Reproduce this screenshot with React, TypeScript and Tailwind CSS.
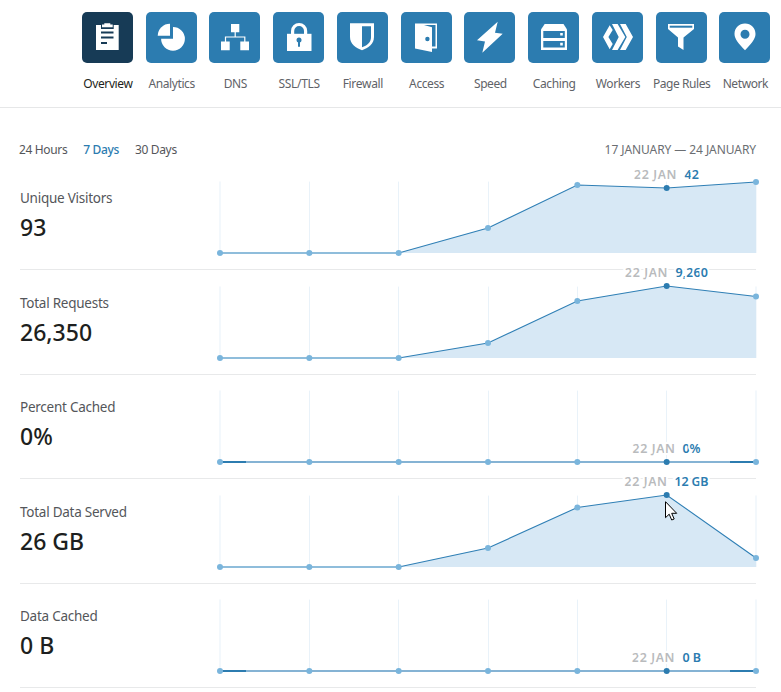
import React from "react";

type IconProps = { children: React.ReactNode };

function Glyph({ children }: IconProps) {
  return (
    <svg viewBox="0 0 51 51" className="size-full fill-white">
      {children}
    </svg>
  );
}

const BLUE = "#2c7cb0";
const NAVY = "#173b56";

const navItems = [
  {
    label: "Overview",
    tracking: "tracking-[-0.4px]",
    icon: (
      <Glyph>
        <path d="M14 13h5v4h12.7v-4h5v25H14z" />
        <path d="M20 12.6h2.3v-1.3h6v1.3h2.4v2.7H20z" />
        <path d="M19 20.5h12.5M19 25.5h12.5M19 31h6" stroke={NAVY} strokeWidth="1.9" />
      </Glyph>
    ),
  },
  {
    label: "Analytics",
    tracking: "tracking-[-0.4px]",
    icon: (
      <Glyph>
        <path d="M24 11.7v12H11.7A12.2 12.2 0 0 1 24 11.7z" />
        <path d="M27 14.9A11.9 11.9 0 1 1 15.1 26.8H27z" />
      </Glyph>
    ),
  },
  {
    label: "DNS",
    tracking: "tracking-[-0.4px]",
    icon: (
      <Glyph>
        <path d="M22 12h8.3v8.3H22zM12 29.5h8.7v8.7H12zM31.3 29.5H40v8.7h-8.7z" />
        <path d="M26.2 20v5M16.5 30v-5h19.3v5" fill="none" stroke="white" strokeWidth="1.2" />
      </Glyph>
    ),
  },
  {
    label: "SSL/TLS",
    tracking: "tracking-[-0.3px]",
    icon: (
      <Glyph>
        <path d="M14 21.8h24.5V39H14z" />
        <path d="M19.6 22.5V19a6.5 6.5 0 0 1 13 0v3.5" fill="none" stroke="white" strokeWidth="3.2" />
        <circle cx="26" cy="28" r="2.5" fill={BLUE} />
        <path d="M25 28h2v6.7h-2z" fill={BLUE} />
      </Glyph>
    ),
  },
  {
    label: "Firewall",
    tracking: "tracking-[-0.3px]",
    icon: (
      <Glyph>
        <path d="M13 11.2h24V25c0 7-6 11-12 13.3C19 36 13 32 13 25z" />
        <path d="M25 14.3h9V25c0 5.5-4 8.5-9 10.3z" fill={BLUE} />
      </Glyph>
    ),
  },
  {
    label: "Access",
    tracking: "tracking-[-0.4px]",
    icon: (
      <Glyph>
        <path d="M14 11.5h22v25h-5V40l-17-3.5z" />
        <path d="M23 13h11.5v21.5H31V15.2z" fill={BLUE} />
        <circle cx="26.4" cy="27" r="2.2" fill={BLUE} />
      </Glyph>
    ),
  },
  {
    label: "Speed",
    tracking: "tracking-[-0.4px]",
    icon: (
      <Glyph>
        <path d="M33.7 9.7 13 28.3l8 1.2-2.7 11.2 20.4-19-7.7-1z" />
      </Glyph>
    ),
  },
  {
    label: "Caching",
    tracking: "tracking-[-0.4px]",
    icon: (
      <Glyph>
        <path d="M16.7 12H35.5l3.5 5.5V38H13V17.5z" />
        <path d="M15.3 19h21.5v7H15.3zM15.3 29h21.5v6.5H15.3z" fill={BLUE} />
        <path d="M32.2 21h2.6v2.6h-2.6zM32.2 30.8h2.6v2.6h-2.6z" />
      </Glyph>
    ),
  },
  {
    label: "Workers",
    tracking: "tracking-[-0.4px]",
    icon: (
      <Glyph>
        <path d="M17.7 13.3l3 4.7-4.3 7 4.3 7-3 5.2L11 25z" />
        <path d="M20 12h5.6l7.7 13-7.7 13H20l6.7-13zM28 12h5.7L41 25l-7.3 13H28l6.8-13z" />
      </Glyph>
    ),
  },
  {
    label: "Page Rules",
    tracking: "tracking-[-0.45px]",
    icon: (
      <Glyph>
        <path d="M12 12h26v5l-10.500 8.500V38L22 34.500v-9L12 17z" />
        <path d="M13.700 13.700h22.600v2H13.700z" fill={BLUE} />
      </Glyph>
    ),
  },
  {
    label: "Network",
    tracking: "tracking-[-0.4px]",
    icon: (
      <Glyph>
        <path
          fillRule="evenodd"
          d="M26 11.5c6 0 10.5 4.6 10.5 10.5 0 5-4.5 10-10.5 16.3C20 32 15.5 27 15.5 22c0-5.9 4.500-10.500 10.500-10.500zm0 6.300a4.500 4.500 0 1 0 0 9 4.500 4.500 0 0 0 0-9z"
        />
      </Glyph>
    ),
  },
];

type Metric = {
  title: string;
  total: string;
  points: number[];
  value: string;
  dateX: number;
  valueX: number;
  valueWidth: number;
  height: string;
};

const metrics: Metric[] = [
  { title: "Unique Visitors", total: "93", points: [0, 0, 0, 25, 68, 65, 71], value: "42", dateX: 414, valueX: 464.5, valueWidth: 14.5, height: "h-[105px]" },
  { title: "Total Requests", total: "26,350", points: [0, 0, 0, 15, 57, 72, 61.5], value: "9,260", dateX: 405, valueX: 455.5, valueWidth: 32.5, height: "h-[105px]" },
  { title: "Percent Cached", total: "0%", points: [0, 0, 0, 0, 0, 0, 0], value: "0%", dateX: 412.5, valueX: 462.5, valueWidth: 18, height: "h-[104px]" },
  { title: "Total Data Served", total: "26 GB", points: [0, 0, 0, 19, 59.5, 72, 9], value: "12 GB", dateX: 404.5, valueX: 454.5, valueWidth: 34, height: "h-[105px]" },
  { title: "Data Cached", total: "0 B", points: [0, 0, 0, 0, 0, 0, 0], value: "0 B", dateX: 412, valueX: 462.5, valueWidth: 18.5, height: "h-[104px]" },
];

const STEP = 536 / 6;
const BASE = 72;

function Sparkline({ metric }: { metric: Metric }) {
  const pts = metric.points.map((v, i) => [i * STEP, BASE - v]);
  const flat = metric.points.every((v) => v === 0);
  const line = pts.map((p) => p.join(",")).join(" ");
  const hover = pts[5];
  return (
    <svg width="536" height="72" className="shrink-0 overflow-visible">
      {pts.map(([x], i) => (
        <line
          key={i}
          x1={i === 0 || i === 6 ? x : Math.floor(x) + 0.5}
          x2={i === 0 || i === 6 ? x : Math.floor(x) + 0.5}
          y1={0.6}
          y2={BASE}
          stroke={i === 0 || i === 6 ? "#f3f8fc" : "#e9f2f9"}
          strokeWidth={i === 0 || i === 6 ? 2 : 1}
        />
      ))}
      {!flat && (
        <>
          <polygon points={`${line} 536,${BASE}`} fill="#d7e8f5" />
          <polyline points={pts.slice(2).map((p) => p.join(",")).join(" ")} fill="none" stroke="#2f7fb5" strokeWidth="1.1" />
          <line x1="0" x2={2 * STEP} y1={BASE} y2={BASE} stroke="#8fbddb" strokeWidth="2" />
        </>
      )}
      {flat && (
        <>
          <line x1="0" x2="536" y1={BASE} y2={BASE} stroke="#85b3d4" strokeWidth="2" />
          <path d={`M0 ${BASE}H26M510 ${BASE}H536`} stroke="#2c7cb0" strokeWidth="2" />
        </>
      )}
      {pts.map(([x, y], i) => (
        <circle key={i} cx={x} cy={y} r="3" fill={i === 5 ? "#2c7cb0" : "#7ab5dc"} />
      ))}
      <g className="text-[12.5px] font-semibold" stroke="white" strokeWidth="4" paintOrder="stroke">
        <text x={metric.dateX} y={hover[1] - 9} textLength={42.5} fill="#b9bbbd">
          22 JAN
        </text>
        <text x={metric.valueX} y={hover[1] - 9} textLength={metric.valueWidth} fill="#2c7cb0">
          {metric.value}
        </text>
      </g>
    </svg>
  );
}

function Cursor() {
  return (
    <svg width="13" height="20" viewBox="0 0 13 20" className="absolute left-[665px] top-[501px]">
      <path d="M.5.7v16l3.7-3.5 2.5 5.8 2.5-1-2.5-5.7h5z" fill="white" stroke="black" strokeWidth="1" />
    </svg>
  );
}

export default function App() {
  return (
    <div className="relative h-[692px] w-[781px] overflow-hidden bg-white font-['Noto_Sans','Open_Sans',sans-serif] text-[#54565a]">
      <nav className="flex h-[108px] border-b border-[#e6e7e8] pl-[75.53px] pt-3">
        {navItems.map((item, i) => (
          <a key={item.label} className="flex w-[63.75px] shrink-0 flex-col items-center">
            <span className={`block size-[51px] rounded-[5px] ${i === 0 ? "bg-[#173b56]" : "bg-[#2c7cb0]"}`}>{item.icon}</span>
            <span className={`mt-3 whitespace-nowrap pl-px text-[12px] leading-[18px] ${item.tracking} ${i === 0 ? "text-[#1d1f20]" : "text-[#5f6368]"}`}>
              {item.label}
            </span>
          </a>
        ))}
      </nav>
      <main className="w-[756px] pl-5">
        <div className="-ml-px flex h-[57px] items-start justify-between pt-[34px] text-[12px] leading-4">
          <div className="flex gap-4">
            <span className="tracking-[-0.35px]">24 Hours</span>
            <span className="font-medium tracking-[-0.35px] text-[#2c7cb0]">7 Days</span>
            <span className="tracking-[-0.35px]">30 Days</span>
          </div>
          <span className="tracking-[-0.08px] text-[#6b6e72]">17 JANUARY — 24 JANUARY</span>
        </div>
        {metrics.map((m) => (
          <section key={m.title} className={`flex items-end border-b border-[#e8e9ea] pb-4 ${m.height}`}>
            <div className="w-[200px] shrink-0 pb-[7px]">
              <h2 className="text-[13.5px] leading-5 tracking-[-0.25px]">{m.title}</h2>
              <p className="text-[23px] font-medium leading-[38px] text-[#1d1f20]">{m.total}</p>
            </div>
            <Sparkline metric={m} />
          </section>
        ))}
      </main>
      <Cursor />
    </div>
  );
}
